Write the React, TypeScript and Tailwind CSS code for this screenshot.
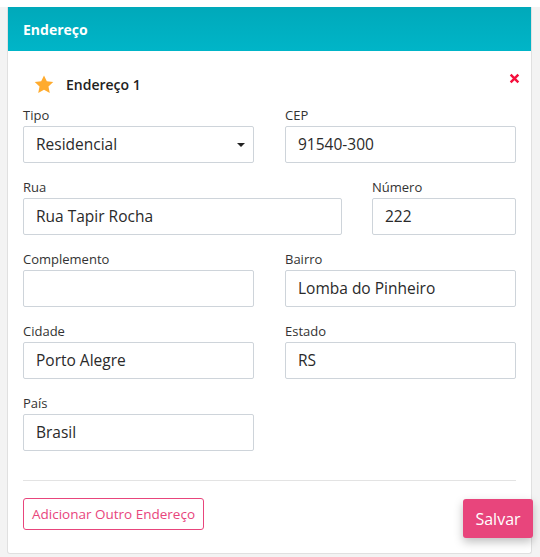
import React from 'react';

const font = { fontFamily: '"Open Sans", "Noto Sans", sans-serif' };

interface FieldProps {
  label: string;
  value: string;
  select?: boolean;
}

const Field: React.FC<FieldProps> = ({ label, value, select }) => (
  <div className="flex flex-col">
    <label className="h-5 mb-px text-[13px] leading-5 text-[#333]">{label}</label>
    <div className="relative flex h-[37px] items-center rounded-[2px] border border-[#ced4da] bg-white pl-3 text-[15.5px] text-[#2a2a2a]">
      {value}
      {select && (
        <span className="absolute right-[8px] top-[16px] h-0 w-0 border-x-[4px] border-t-[4px] border-x-transparent border-t-[#222]" />
      )}
    </div>
  </div>
);

const App: React.FC = () => {
  return (
    <div className="h-[557px] w-[540px] bg-white pt-[7px]" style={font}>
      <div className="h-[550px] bg-[#f3f3f3] pl-[7px] pr-[8px]">
        <div className="relative rounded-b-[3px] border border-t-0 border-[#e0e0e0] bg-white">
          <div className="flex h-[44px] items-center bg-gradient-to-b from-[#00a9ba] to-[#00b5c8] px-[15px] text-[14px] font-bold text-white">
            Endereço
          </div>
          <div className="px-[15px] pt-[21px] pb-[23px]">
            <div className="relative flex h-6 items-center">
              <svg className="ml-[11px]" width="20" height="19" viewBox="0 0 24 23">
                <path
                  fill="#ffab2e"
                  d="M12 0.5l3.4 7.1 7.8.9-5.8 5.4 1.6 7.8L12 17.8l-7 3.9 1.6-7.8-5.8-5.4 7.8-.9z"
                />
              </svg>
              <span className="ml-[12px] text-[14px] font-semibold text-[#222]">Endereço 1</span>
              <svg className="absolute right-[-4px] top-[1px]" width="11" height="11" viewBox="0 0 10 10">
                <path d="M1.5 1.5l7 7M8.5 1.5l-7 7" stroke="#f50f3c" strokeWidth="2.2" />
              </svg>
            </div>

            <div className="mt-[9px] flex flex-col gap-[14px]">
              <div className="grid grid-cols-2 gap-x-[31px]">
                <Field label="Tipo" value="Residencial" select />
                <Field label="CEP" value="91540-300" />
              </div>
              <div className="grid grid-cols-[319px_1fr] gap-x-[30px]">
                <Field label="Rua" value="Rua Tapir Rocha" />
                <Field label="Número" value="222" />
              </div>
              <div className="grid grid-cols-2 gap-x-[31px]">
                <Field label="Complemento" value="" />
                <Field label="Bairro" value="Lomba do Pinheiro" />
              </div>
              <div className="grid grid-cols-2 gap-x-[31px]">
                <Field label="Cidade" value="Porto Alegre" />
                <Field label="Estado" value="RS" />
              </div>
              <div className="grid grid-cols-2 gap-x-[31px]">
                <Field label="País" value="Brasil" />
              </div>
            </div>

            <div className="mt-[29px] border-t border-[#e3e3e3]" />

            <button className="mt-[17px] h-[32px] w-[181px] rounded-[3px] border border-[#e8457c] text-[13.5px] text-[#e8457c]">
              Adicionar Outro Endereço
            </button>
          </div>
          <button className="absolute left-[455px] top-[492px] h-[39px] w-[70px] rounded-[3px] bg-[#e8457c] text-[16px] text-white shadow-[0_4px_10px_rgba(0,0,0,0.25)]">
            Salvar
          </button>
        </div>
      </div>
    </div>
  );
};

export default App;
